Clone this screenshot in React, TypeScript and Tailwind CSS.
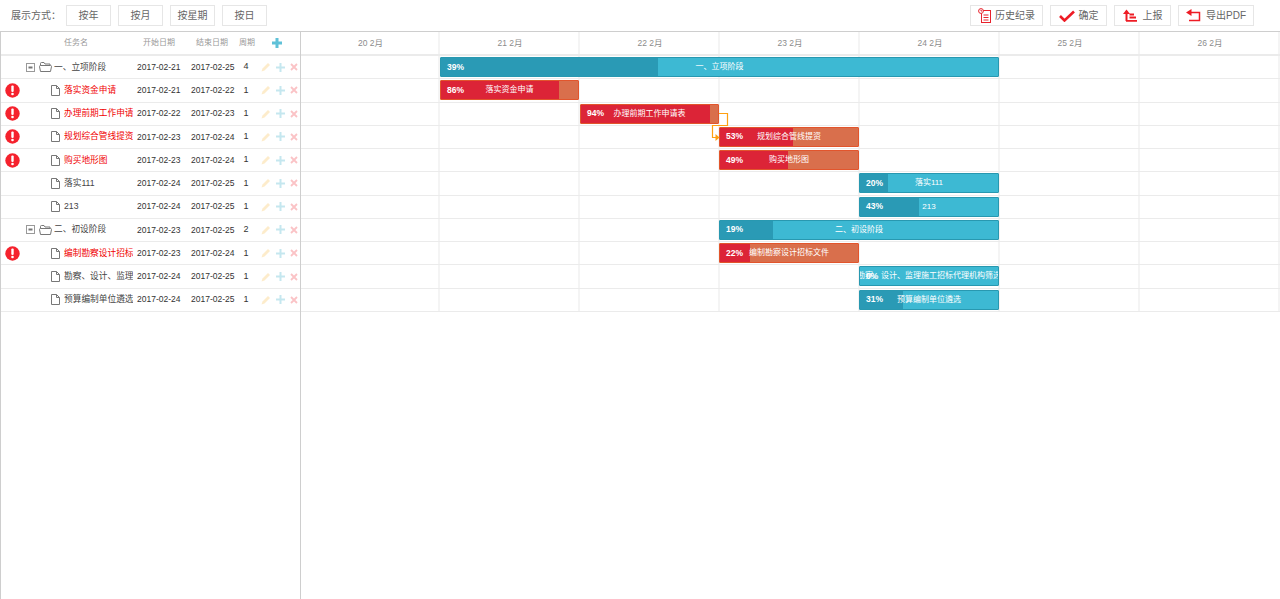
import React from "react";

/*
  Gantt page: toolbar on top, task grid on the left, timeline on the right
*/

type Task = {
  name: string;
  start: string;
  end: string;
  days: number;
  group?: boolean;
  late?: boolean;
  from: number;
  span: number;
  progress: number;
};

const tasks: Task[] = [
  { name: "一、立项阶段", start: "2017-02-21", end: "2017-02-25", days: 4, group: true, from: 0, span: 4, progress: 39 },
  { name: "落实资金申请", start: "2017-02-21", end: "2017-02-22", days: 1, late: true, from: 0, span: 1, progress: 86 },
  { name: "办理前期工作申请表", start: "2017-02-22", end: "2017-02-23", days: 1, late: true, from: 1, span: 1, progress: 94 },
  { name: "规划综合管线提资", start: "2017-02-23", end: "2017-02-24", days: 1, late: true, from: 2, span: 1, progress: 53 },
  { name: "购买地形图", start: "2017-02-23", end: "2017-02-24", days: 1, late: true, from: 2, span: 1, progress: 49 },
  { name: "落实111", start: "2017-02-24", end: "2017-02-25", days: 1, from: 3, span: 1, progress: 20 },
  { name: "213", start: "2017-02-24", end: "2017-02-25", days: 1, from: 3, span: 1, progress: 43 },
  { name: "二、初设阶段", start: "2017-02-23", end: "2017-02-25", days: 2, group: true, from: 2, span: 2, progress: 19 },
  { name: "编制勘察设计招标文件", start: "2017-02-23", end: "2017-02-24", days: 1, late: true, from: 2, span: 1, progress: 22 },
  { name: "勘察、设计、监理施工招标代理机构筛选", start: "2017-02-24", end: "2017-02-25", days: 1, from: 3, span: 1, progress: 0 },
  { name: "预算编制单位遴选", start: "2017-02-24", end: "2017-02-25", days: 1, from: 3, span: 1, progress: 31 },
];

const dayLabels = ["20 2月", "21 2月", "22 2月", "23 2月", "24 2月", "25 2月", "26 2月"];

const AlertIcon = () => (
  <svg width="15" height="15" viewBox="0 0 15 15">
    <circle cx="7.5" cy="7.5" r="7.2" fill="#f5222d" />
    <rect x="6.3" y="2.6" width="2.4" height="6.4" rx="1" fill="#fff" />
    <circle cx="7.5" cy="11" r="1.3" fill="#fff" />
  </svg>
);

const FileIcon = () => (
  <svg width="9" height="11" viewBox="0 0 9 11" fill="none" stroke="#777" strokeWidth="1">
    <path d="M0.5 0.5H5.5L8.5 3.5V10.5H0.5Z" />
    <path d="M5.5 0.5V3.5H8.5" />
  </svg>
);

const FolderIcon = () => (
  <svg width="13" height="10" viewBox="0 0 13 10" fill="none" stroke="#777" strokeWidth="1">
    <path d="M1.5 3.5V1.5Q1.5 0.5 2.5 0.5H5L6 2H11V3.5" />
    <path d="M0.5 4.5Q0.5 3.5 1.5 3.5H11.5Q12.5 3.5 12.5 4.5L11.5 9.5H1.5Z" />
  </svg>
);

const Toggle = () => (
  <svg width="9" height="9" viewBox="0 0 9 9">
    <rect x="0.5" y="0.5" width="8" height="8" fill="#fff" stroke="#999" />
    <rect x="2.5" y="3.5" width="4" height="2" fill="#777" />
  </svg>
);

const RowActions = () => (
  <div className="ml-[3px] flex items-center">
    <svg width="10" height="10" viewBox="0 0 10 10">
      <path d="M0.5 9.5L1.5 6.5L7 1L9 3L3.5 8.5Z" fill="#fdeccb" />
    </svg>
    <svg width="9" height="9" viewBox="0 0 9 9" className="ml-[5px]">
      <path d="M3.5 0H5.5V3.5H9V5.5H5.5V9H3.5V5.5H0V3.5H3.5Z" fill="#c5e7ef" />
    </svg>
    <svg width="8" height="8" viewBox="0 0 8 8" className="ml-[5px]">
      <path d="M1 1L7 7M7 1L1 7" stroke="#fbc3c6" strokeWidth="1.8" />
    </svg>
  </div>
);

const GridRow = ({ task }: { task: Task }) => (
  <div className="flex h-[23.27px] items-center border-b border-[#ebebeb] text-[8.5px] text-[#333]">
    <div className="flex w-[25px] shrink-0 items-center pl-[4px]">{task.late && <AlertIcon />}</div>
    {task.group ? (
      <div className="flex w-[28px] shrink-0 items-center gap-[4px]">
        <Toggle />
        <FolderIcon />
      </div>
    ) : (
      <div className="flex w-[38px] shrink-0 items-center pl-[25px]">
        <FileIcon />
      </div>
    )}
    <div
      className={
        "overflow-hidden whitespace-nowrap text-[8.7px] " +
        (task.group ? "w-[79px] " : "w-[69px] ") +
        (task.late ? "text-[#f00000]" : "text-[#454545]")
      }
    >
      {task.name}
    </div>
    <div className="w-[54px] shrink-0 whitespace-nowrap pl-[4px]">{task.start}</div>
    <div className="w-[47px] shrink-0 whitespace-nowrap pl-[4px]">{task.end}</div>
    <div className="w-[24px] shrink-0 text-center text-[9px]">{task.days}</div>
    <RowActions />
  </div>
);

const GridHeader = () => (
  <div className="flex h-[24px] items-center border-b-2 border-[#ebebeb] text-[8px] text-[#999]">
    <div className="w-[63px] shrink-0" />
    <div className="w-[79px] shrink-0">任务名</div>
    <div className="w-[53px] shrink-0">开始日期</div>
    <div className="w-[43px] shrink-0">结束日期</div>
    <div className="w-[33px] shrink-0">周期</div>
    <svg width="10" height="10" viewBox="0 0 10 10">
      <path d="M3.5 0H6.5V3.5H10V6.5H6.5V10H3.5V6.5H0V3.5H3.5Z" fill="#5fc1d8" />
    </svg>
  </div>
);

const Bar = ({ task }: { task: Task }) => {
  // bars from the third day on sit one pixel further left
  const left = 139 + task.from * 140 - (task.from >= 2 ? 1 : 0);
  const right = 139 + (task.from + task.span) * 140 - 1;
  return (
    <div className="h-[23.27px] border-b border-[#ebebeb] pt-[1px]">
      <div
        className={
          "relative h-[20px] overflow-hidden rounded-[1px] border " +
          (task.late ? "border-[#e2552c] bg-[#d96f4c]" : "border-[#2898b0] bg-[#3db9d3]")
        }
        style={{ marginLeft: left, width: right - left }}
      >
        <div
          className={"absolute bottom-0 left-0 top-0 " + (task.late ? "bg-[#dc2437]" : "bg-[#2a9ab5]")}
          style={{ width: `${task.progress}%` }}
        />
        <div className="absolute inset-0 flex items-center justify-center whitespace-nowrap text-[8px] text-white">
          {task.name}
        </div>
        <div className="absolute bottom-0 left-[6px] top-0 flex items-center text-[8.5px] font-bold text-white">
          {task.progress}%
        </div>
      </div>
    </div>
  );
};

const ToolButton = ({
  icon,
  label,
  width,
  gap,
}: {
  icon: React.ReactNode;
  label: string;
  width: string;
  gap: string;
}) => (
  <button
    className={
      "flex h-[21px] items-center justify-center border border-[#e6e6e6] bg-white text-[10px] text-[#666] " +
      width +
      " " +
      gap
    }
  >
    {icon}
    <span>{label}</span>
  </button>
);

const HistoryIcon = () => (
  <svg width="13" height="15" viewBox="0 0 13 15" fill="none" stroke="#e8222c" strokeWidth="1">
    <rect x="3.5" y="2.5" width="9" height="12" />
    <circle cx="3" cy="3" r="2.4" fill="#fff" />
    <path d="M3 1.8V3H4.2" />
    <path d="M5.5 7H10.5M5.5 9.5H10.5M5.5 12H10.5" />
  </svg>
);

const CheckIcon = () => (
  <svg width="16" height="12" viewBox="0 0 16 12" fill="none">
    <path d="M1 6L5.5 10.5L15 1.5" stroke="#ee1c25" strokeWidth="2.6" />
  </svg>
);

const ReportIcon = () => (
  <svg width="14" height="13" viewBox="0 0 14 13" fill="none">
    <path d="M3.5 12V2" stroke="#ee1c25" strokeWidth="2" />
    <path d="M0 5L3.5 0.5L7 5Z" fill="#ee1c25" />
    <path d="M6.5 5.5H11M6.5 8.5H13M3 11.8H14" stroke="#ee1c25" strokeWidth="1.8" />
  </svg>
);

const ExportIcon = () => (
  <svg width="15" height="13" viewBox="0 0 15 13" fill="none">
    <path d="M5 3.5H13.5V11.5H3" stroke="#ee1c25" strokeWidth="1.5" />
    <path d="M0 3.5L5.5 0V7Z" fill="#ee1c25" />
  </svg>
);

const App: React.FC = () => {
  return (
    <div
      className="h-[599px] w-[1280px] overflow-hidden bg-white text-[#454545]"
      style={{ fontFamily: '"Liberation Sans", "Noto Sans CJK SC", sans-serif' }}
    >
      {/* toolbar */}
      <div className="flex h-[31px] items-center pl-[11px] pr-[26px]">
        <span className="w-[55px] text-[10px] text-[#666]">展示方式：</span>
        <div className="flex gap-[7px] text-[10px] text-[#666]">
          <button className="h-[21px] w-[45px] border border-[#e6e6e6]">按年</button>
          <button className="h-[21px] w-[45px] border border-[#e6e6e6]">按月</button>
          <button className="h-[21px] w-[45px] border border-[#e6e6e6]">按星期</button>
          <button className="h-[21px] w-[45px] border border-[#e6e6e6]">按日</button>
        </div>
        <div className="ml-auto flex gap-[7px]">
          <ToolButton icon={<HistoryIcon />} label="历史纪录" width="w-[73px]" gap="gap-[4px]" />
          <ToolButton icon={<CheckIcon />} label="确定" width="w-[57px]" gap="gap-[4px]" />
          <ToolButton icon={<ReportIcon />} label="上报" width="w-[57px]" gap="gap-[6px]" />
          <ToolButton icon={<ExportIcon />} label="导出PDF" width="w-[76px]" gap="gap-[5px]" />
        </div>
      </div>

      {/* gantt */}
      <div className="flex h-[568px] border-l border-t border-[#cecece]">
        <div className="w-[300px] shrink-0 border-r border-[#cecece]">
          <GridHeader />
          {tasks.map((t) => (
            <GridRow key={t.name} task={t} />
          ))}
        </div>

        <div className="min-w-0 flex-1">
          <div className="flex h-[24px] border-b-2 border-[#ebebeb] text-[8.5px] text-[#8c8c8c]">
            {dayLabels.map((d, i) => (
              <div
                key={d}
                className={
                  "flex items-center justify-center border-r-2 border-[#f4f4f4] pl-[2px] " +
                  (i === 0 ? "w-[139px]" : "w-[140px]")
                }
              >
                {d}
              </div>
            ))}
          </div>

          <div className="relative">
            {/* day columns behind the bars */}
            <div className="absolute inset-0 flex">
              {dayLabels.map((d, i) => (
                <div
                  key={d}
                  className={"border-r-2 border-[#f4f4f4] " + (i === 0 ? "w-[139px]" : "w-[140px]")}
                />
              ))}
            </div>
            <div className="relative">
              {tasks.map((t) => (
                <Bar key={t.name} task={t} />
              ))}
            </div>
            {/* dependency link */}
            <svg className="absolute left-[408px] top-[55px]" width="22" height="30" viewBox="0 0 22 30" fill="none">
              <path d="M10 2.5H18.5V14.5H3.5V26.5H8" stroke="#ffa011" strokeWidth="1.2" />
              <path d="M6.5 23L10.5 26.5L6.5 30Z" fill="#ffa011" />
            </svg>
          </div>
        </div>
      </div>
    </div>
  );
};

export default App;
